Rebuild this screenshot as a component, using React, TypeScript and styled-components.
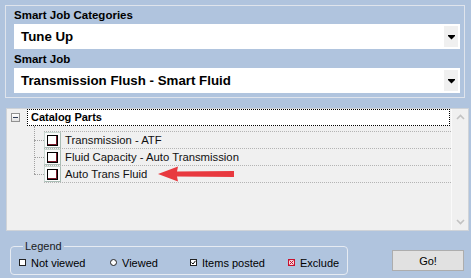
import React from "react";
import styled, { createGlobalStyle } from "styled-components";

const GlobalStyle = createGlobalStyle`
  html, body {
    margin: 0;
    padding: 0;
    background: #b0c4de;
  }
  body {
    font-family: "Liberation Sans", Arial, sans-serif;
    font-size: 11px;
    color: #000;
  }
`;

const Screen = styled.div`
  width: 471px;
  height: 278px;
  padding-top: 5px;
  box-sizing: border-box;
  display: flex;
  flex-direction: column;
  overflow: hidden;
`;

const TopGroup = styled.div`
  margin-left: 5px;
  width: 460px;
  box-sizing: border-box;
  border: 1px solid #dfe4ec;
  padding: 2px 4px 4px 8px;
  display: flex;
  flex-direction: column;
`;

const FieldLabel = styled.div<{ $gap?: number }>`
  font-weight: bold;
  font-size: 11.5px;
  line-height: 14px;
  margin-top: ${(p) => p.$gap ?? 0}px;
  margin-bottom: 2px;
`;

const Select = styled.div`
  position: relative;
  height: 25px;
  background: #fff;
  display: flex;
  align-items: center;
  padding-left: 7px;
  font-weight: bold;
  font-size: 13.3px;
`;

const DropButton = styled.div`
  position: absolute;
  right: 2px;
  top: 2px;
  bottom: 2px;
  width: 14px;
  background: #f0f0f0;
  display: flex;
  align-items: center;
  justify-content: center;
  padding-top: 1px;
  box-sizing: border-box;
`;

const TreePanel = styled.div`
  margin: 10px 0 0 6px;
  width: 463px;
  height: 123px;
  box-sizing: border-box;
  border: 1px solid #cfd3d8;
  background: #f0f0f0;
  display: flex;
`;

const TreeBody = styled.div`
  flex: 1;
  display: flex;
  flex-direction: column;
`;

const RootRow = styled.div`
  height: 17px;
  display: flex;
  align-items: center;
`;

const Toggle = styled.div`
  width: 9px;
  height: 9px;
  box-sizing: border-box;
  margin-left: 4px;
  border: 1px solid #919191;
  background: linear-gradient(#ffffff, #e2e2e2);
  display: flex;
  align-items: center;
  justify-content: center;
  &::after {
    content: "";
    width: 5px;
    height: 1px;
    background: #2e3c56;
  }
`;

const FocusLabel = styled.div`
  margin-left: 7px;
  width: 423px;
  height: 17px;
  box-sizing: border-box;
  border: 1px dotted #000;
  background: #fff;
  font-weight: bold;
  font-size: 11px;
  line-height: 15px;
  padding-left: 3px;
`;

const Children = styled.div`
  position: relative;
  margin: 6px 0 0 27px;
  width: 417px;
  &::before {
    content: "";
    position: absolute;
    left: 0;
    top: -6px;
    height: 48px;
    border-left: 1px dotted #a0a0a0;
  }
`;

const ChildRow = styled.div`
  display: flex;
  height: 17px;
`;

const Branch = styled.div`
  width: 10px;
  position: relative;
  &::after {
    content: "";
    position: absolute;
    left: 0;
    right: 0;
    top: 8px;
    border-top: 1px dotted #a0a0a0;
  }
`;

const Item = styled.div<{ $first?: boolean }>`
  flex: 1;
  display: flex;
  align-items: center;
  box-sizing: border-box;
  height: ${(p) => (p.$first ? 18 : 17)}px;
  margin-top: ${(p) => (p.$first ? -1 : 0)}px;
  border-bottom: 1px dotted #b4b4b4;
  border-top: ${(p) => (p.$first ? "1px dotted #b4b4b4" : "none")};
`;

const CheckCell = styled.div`
  width: 17px;
  height: 16px;
  box-sizing: border-box;
  border: 1px solid #c9d8d1;
  border-right-color: #a9bdb5;
  border-bottom-color: #a9bdb5;
  background: #fbfbfb;
  display: flex;
  align-items: center;
  justify-content: center;
`;

const CheckBox = styled.div`
  width: 11px;
  height: 11px;
  box-sizing: border-box;
  border: 1px solid #000;
  background: #fff;
  box-shadow: inset -1px -1px 0 #7a1a2a;
`;

const ItemText = styled.span`
  margin-left: 4px;
  font-size: 11.3px;
  color: #111;
  white-space: nowrap;
`;

const Scrollbar = styled.div`
  width: 17px;
  border-left: 1px solid #fafafa;
  background: #f0f0f0;
  display: flex;
  flex-direction: column;
  justify-content: space-between;
  align-items: center;
  padding: 5px 0 5px;
`;

const Bottom = styled.div`
  display: flex;
  align-items: flex-start;
  margin-top: 9px;
`;

const Legend = styled.fieldset`
  margin: 0 0 0 10px;
  width: 338px;
  height: 35px;
  box-sizing: border-box;
  border: 1px solid #e6ebf2;
  border-radius: 4px;
  padding: 0 0 0 8px;
  display: flex;
  align-items: center;
  legend {
    padding: 0 2px;
    margin-left: 4px;
    font-size: 11px;
    line-height: 13px;
    color: #1a1a1a;
  }
`;

const LegendItem = styled.div<{ $w?: number }>`
  width: ${(p) => (p.$w ? `${p.$w}px` : "auto")};
  display: flex;
  align-items: center;
  gap: 5px;
  margin-top: -2px;
  font-size: 11px;
  white-space: nowrap;
`;

const Mark = styled.span<{ $kind: "box" | "circle" | "check" | "ex" }>`
  width: 7px;
  height: 7px;
  box-sizing: border-box;
  display: inline-flex;
  align-items: center;
  justify-content: center;
  border: 1px solid ${(p) => (p.$kind === "ex" ? "#c8102e" : "#222")};
  border-radius: ${(p) => (p.$kind === "circle" ? "50%" : "0")};
  background: ${(p) => (p.$kind === "ex" ? "#f6d3d8" : "#fff")};
`;

const GoButton = styled.button`
  margin: 10px 0 0 44px;
  width: 72px;
  height: 21px;
  background: #e1e1e1;
  border: 1px solid #adadad;
  font-family: "Liberation Sans", Arial, sans-serif;
  font-size: 11px;
  padding: 0;
  color: #000;
`;

const DropArrow = () => (
  <svg width="7" height="5" viewBox="0 0 7 5">
    <rect x="0" y="0" width="7" height="1" fill="#000" />
    <polygon points="0,1 7,1 3.5,4.5" fill="#000" />
  </svg>
);

const Chevron = ({ up }: { up?: boolean }) => (
  <svg width="9" height="6" viewBox="0 0 9 6">
    <polyline
      points={up ? "1,5 4.5,1.5 8,5" : "1,1 4.5,4.5 8,1"}
      fill="none"
      stroke="#c2c2c2"
      strokeWidth="1.6"
    />
  </svg>
);

const RedArrow = () => (
  <svg width="78" height="16" viewBox="0 0 78 16" style={{ marginLeft: 11 }}>
    <polygon
      points="0,8 20,0.5 19,5.5 76,5 76,11 19,10.5 20,15.5"
      fill="#e8393f"
    />
  </svg>
);

const children = [
  "Transmission - ATF",
  "Fluid Capacity - Auto Transmission",
  "Auto Trans Fluid",
];

export default function App() {
  return (
    <>
      <GlobalStyle />
      <Screen>
        <TopGroup>
          <FieldLabel>Smart Job Categories</FieldLabel>
          <Select>
            Tune Up
            <DropButton>
              <DropArrow />
            </DropButton>
          </Select>
          <FieldLabel $gap={3}>Smart Job</FieldLabel>
          <Select>
            Transmission Flush - Smart Fluid
            <DropButton>
              <DropArrow />
            </DropButton>
          </Select>
        </TopGroup>

        <TreePanel>
          <TreeBody>
            <RootRow>
              <Toggle />
              <FocusLabel>Catalog Parts</FocusLabel>
            </RootRow>
            <Children>
              {children.map((c, i) => (
                <ChildRow key={c}>
                  <Branch />
                  <Item $first={i === 0}>
                    <CheckCell>
                      <CheckBox />
                    </CheckCell>
                    <ItemText>{c}</ItemText>
                    {i === 2 && <RedArrow />}
                  </Item>
                </ChildRow>
              ))}
            </Children>
          </TreeBody>
          <Scrollbar>
            <Chevron up />
            <Chevron />
          </Scrollbar>
        </TreePanel>

        <Bottom>
          <Legend>
            <legend>Legend</legend>
            <LegendItem $w={91}>
              <Mark $kind="box" />
              Not viewed
            </LegendItem>
            <LegendItem $w={80}>
              <Mark $kind="circle" />
              Viewed
            </LegendItem>
            <LegendItem $w={98}>
              <Mark $kind="check">
                <svg width="5" height="5" viewBox="0 0 5 5">
                  <polyline points="0.5,2.5 2,4 4.5,0.8" fill="none" stroke="#000" strokeWidth="1" />
                </svg>
              </Mark>
              Items posted
            </LegendItem>
            <LegendItem>
              <Mark $kind="ex">
                <svg width="5" height="5" viewBox="0 0 5 5">
                  <path d="M0.5 0.5 L4.5 4.5 M4.5 0.5 L0.5 4.5" stroke="#c8102e" strokeWidth="1" />
                </svg>
              </Mark>
              Exclude
            </LegendItem>
          </Legend>
          <GoButton>Go!</GoButton>
        </Bottom>
      </Screen>
    </>
  );
}
